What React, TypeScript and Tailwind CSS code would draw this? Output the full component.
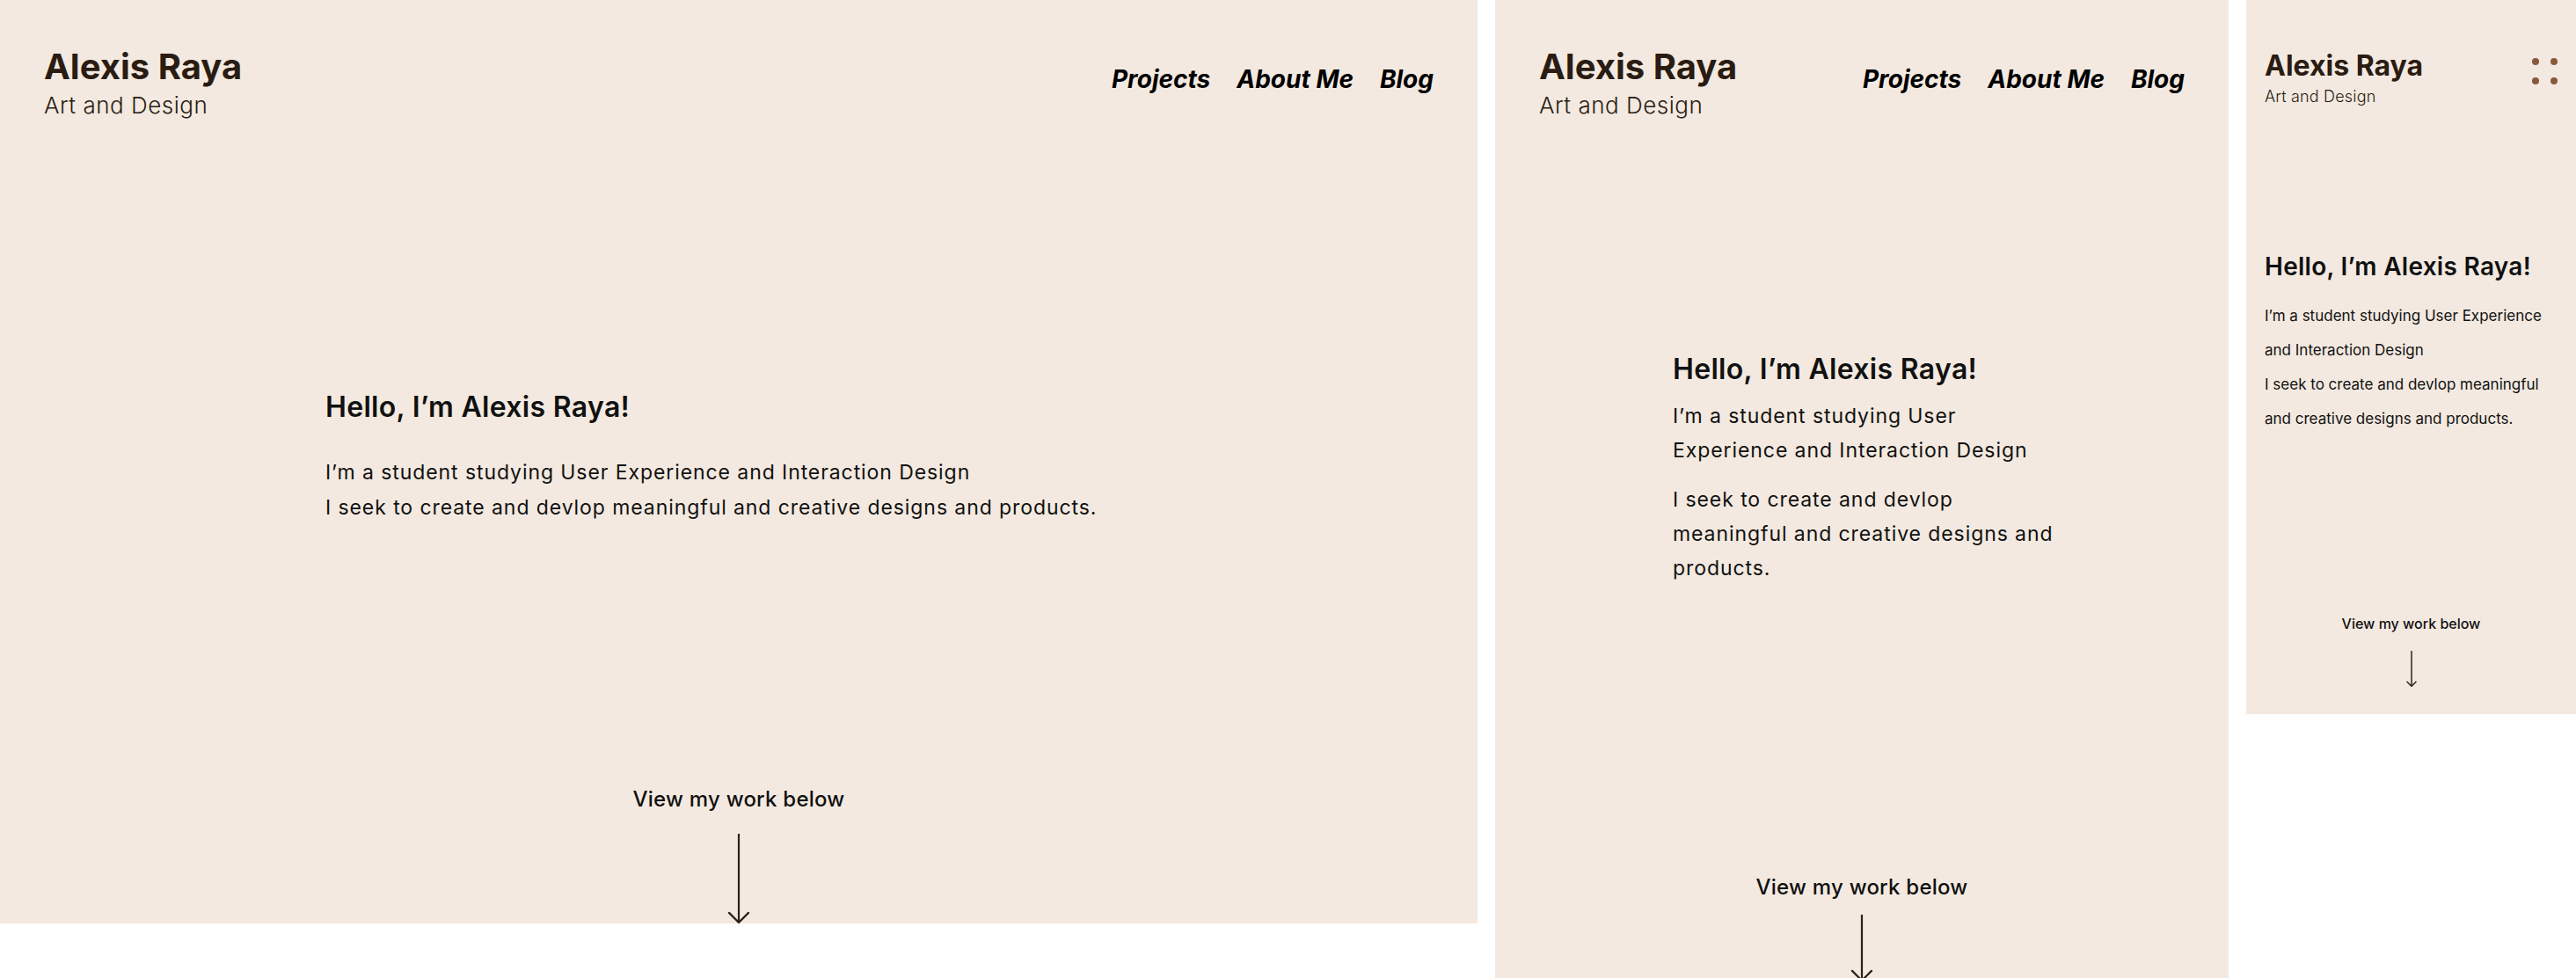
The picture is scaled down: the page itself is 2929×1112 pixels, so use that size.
import React from "react";

const ink = "text-[#2a1c12]";

interface ArrowProps {
  width: number;
  height: number;
  stroke: number;
  head: number;
}

const Arrow = ({ width, height, stroke, head }: ArrowProps) => {
  const cx = width / 2;
  const tip = height - stroke / 2;
  return (
    <svg width={width} height={height} viewBox={`0 0 ${width} ${height}`} className="block shrink-0">
      <line x1={cx} y1={0} x2={cx} y2={tip} stroke="#2d2118" strokeWidth={stroke} />
      <polyline
        points={`${cx - head},${tip - head} ${cx},${tip} ${cx + head},${tip - head}`}
        fill="none"
        stroke="#2d2118"
        strokeWidth={stroke}
        strokeLinecap="round"
        strokeLinejoin="round"
      />
    </svg>
  );
};

const Nav = () => (
  <nav className="mt-[21px] flex items-center gap-[30px] text-[28px] leading-[34px] font-bold italic text-black">
    <a>Projects</a>
    <a>About Me</a>
    <a>Blog</a>
  </nav>
);

const Brand = () => (
  <div>
    <h1 className={`text-[40px] leading-[48px] font-bold ${ink}`}>Alexis Raya</h1>
    <p className={`mt-[4px] text-[26px] leading-[32px] font-light tracking-[0.02em] ${ink}`}>Art and Design</p>
  </div>
);

const Desktop = () => (
  <section className="flex h-[1050px] w-[1680px] shrink-0 flex-col overflow-hidden bg-[#f3e9e0]">
    <header className="flex items-start justify-between px-[50px] pt-[52px]">
      <Brand />
      <Nav />
    </header>

    <div className="mx-auto mt-[307px] w-[940px] text-[#111]">
      <h2 className="text-[32px] leading-[40px] font-semibold tracking-[0.01em]">Hello, I’m Alexis Raya!</h2>
      <div className="mt-[34px] text-[23px] leading-[40px] tracking-[0.04em]">
        <p>I’m a student studying User Experience and Interaction Design</p>
        <p>I seek to create and devlop meaningful and creative designs and products.</p>
      </div>
    </div>

    <div className="mt-auto flex flex-col items-center">
      <p className="text-[24px] leading-[32px] font-medium tracking-[0.01em] text-[#111]">View my work below</p>
      <div className="mt-[23px]">
        <Arrow width={26} height={102} stroke={2.2} head={11} />
      </div>
    </div>
  </section>
);

const Tablet = () => (
  <section className="flex h-[1112px] w-[834px] shrink-0 flex-col overflow-hidden bg-[#f3e9e0]">
    <header className="flex items-start justify-between px-[50px] pt-[52px]">
      <Brand />
      <Nav />
    </header>

    <div className="ml-[202px] mt-[264px] w-[436px] text-[#111]">
      <h2 className="text-[32px] leading-[40px] font-semibold tracking-[0.01em]">Hello, I’m Alexis Raya!</h2>
      <p className="mt-[14px] text-[23px] leading-[39px] tracking-[0.04em]">
        I’m a student studying User Experience and Interaction Design
      </p>
      <p className="mt-[17px] text-[23px] leading-[39px] tracking-[0.04em]">
        I seek to create and devlop meaningful and creative designs and products.
      </p>
    </div>

    <div className="mt-auto -mb-[4px] flex flex-col items-center">
      <p className="text-[24px] leading-[32px] font-medium tracking-[0.01em] text-[#111]">View my work below</p>
      <div className="mt-[15px]">
        <Arrow width={26} height={76} stroke={2.2} head={11} />
      </div>
    </div>
  </section>
);

const Mobile = () => (
  <section className="flex h-[812px] w-[375px] shrink-0 flex-col bg-[#f3e9e0] px-[21px] pb-[31px]">
    <header className="flex items-start justify-between pt-[56px]">
      <div>
        <h1 className={`text-[32px] leading-[38px] font-bold ${ink}`}>Alexis Raya</h1>
        <p className={`mt-[5px] text-[18px] leading-[22px] font-light tracking-[0.01em] ${ink}`}>Art and Design</p>
      </div>
      <button className="mt-[10px] grid grid-cols-2 gap-x-[13px] gap-y-[14px]" aria-label="Menu">
        <span className="block h-[8px] w-[8px] rounded-full bg-[#875a3b]" />
        <span className="block h-[8px] w-[8px] rounded-full bg-[#875a3b]" />
        <span className="block h-[8px] w-[8px] rounded-full bg-[#875a3b]" />
        <span className="block h-[8px] w-[8px] rounded-full bg-[#875a3b]" />
      </button>
    </header>

    <div className="mt-[165px] text-[#111]">
      <h2 className="text-[28px] leading-[34px] font-semibold tracking-[0.01em]">Hello, I’m Alexis Raya!</h2>
      <div className="mt-[20px] w-[320px] text-[17px] leading-[39px]">
        <p>I’m a student studying User Experience and Interaction Design</p>
        <p>I seek to create and devlop meaningful and creative designs and products.</p>
      </div>
    </div>

    <div className="mt-auto flex flex-col items-center">
      <p className="text-[16px] leading-[20px] font-medium text-[#111]">View my work below</p>
      <div className="mt-[21px]">
        <Arrow width={14} height={41} stroke={1.5} head={5} />
      </div>
    </div>
  </section>
);

export default function App() {
  return (
    <div className="flex w-[2929px] items-start gap-[20px] bg-white font-[Inter,sans-serif]">
      <Desktop />
      <Tablet />
      <Mobile />
    </div>
  );
}
